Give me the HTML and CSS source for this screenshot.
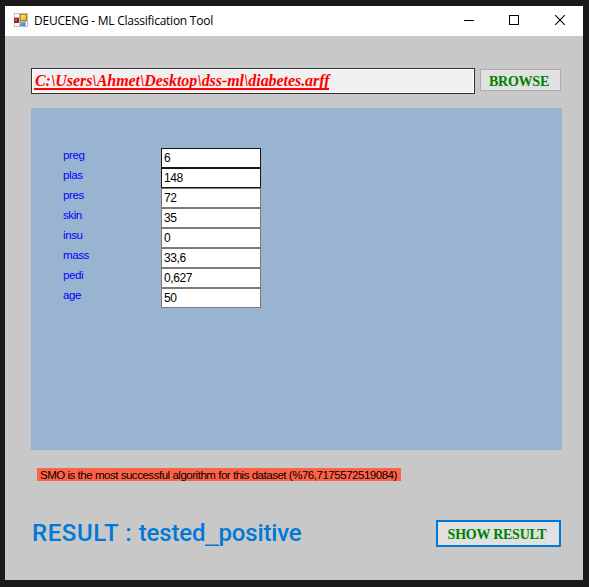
FILE: index.html
```html
<!DOCTYPE html>
<html lang="en">
<head>
<meta charset="utf-8">
<title>DEUCENG - ML Classification Tool</title>
<link rel="stylesheet" href="styles.css">
</head>
<body>
<main class="window">
  <header class="titlebar">
    <svg class="app-icon" width="14" height="14" viewBox="0 0 14 14" shape-rendering="crispEdges">
      <defs>
        <linearGradient id="gold" x2="1" y2="1"><stop stop-color="#ffe98c"/><stop offset="1" stop-color="#eeb300"/></linearGradient>
        <linearGradient id="blue" x2="1" y2="1"><stop stop-color="#8dbdf5"/><stop offset="1" stop-color="#3976d2"/></linearGradient>
      </defs>
      <path fill="#bdbdbd" d="M0 0h14v14H0z"/>
      <path fill="#fff" d="M1 1h4v3H1zM1 10h4v3H1zM12 9h1v4h-1z"/>
      <path fill="#a51c14" d="M0 5h5v5H0z"/><path fill="#dc6850" d="M1 6h2v2H1z"/>
      <path fill="#b98200" d="M6 1h7v7H6z"/><path fill="url(#gold)" d="M7 2h5v5H7z"/>
      <path fill="url(#blue)" d="M6 9h5v4H6z"/>
    </svg>
    <h1 class="title">DEUCENG - ML Classification Tool</h1>
    <svg class="controls" width="103" height="12" viewBox="0 0 103 12" fill="none" stroke="#000">
      <path d="M0 6.500h10M45.500 1.500h9v9h-9z" shape-rendering="crispEdges"/>
      <path d="M91.200 1.200l9.600 9.600M100.800 1.200l-9.600 9.600" stroke-width="1.100"/>
    </svg>
  </header>
  <section class="content">
    <div class="file-row">
      <div class="path"><span class="path-text">C:\Users\Ahmet\Desktop\dss-ml\diabetes.arff</span></div>
      <button class="button browse"><span>BROWSE</span></button>
    </div>
    <div class="panel">
      <div class="labels">
        <label>preg</label><label>plas</label><label>pres</label><label>skin</label>
        <label>insu</label><label>mass</label><label>pedi</label><label>age</label>
      </div>
      <div class="fields">
        <div class="field dark">6</div><div class="field dark">148</div><div class="field">72</div><div class="field">35</div>
        <div class="field">0</div><div class="field">33,6</div><div class="field">0,627</div><div class="field">50</div>
      </div>
    </div>
    <div class="message"><span>SMO is the most successful algorithm for this dataset (%76,7175572519084)</span></div>
    <footer class="footer">
      <div class="result"><span class="result-name">RESULT : </span>tested<span class="underscore">_</span>positive</div>
      <button class="button show"><span>SHOW RESULT</span></button>
    </footer>
  </section>
</main>
</body>
</html>
```
FILE: styles.css
```css
* { box-sizing: border-box; }
body {
  margin: 0;
  height: 587px;
  padding: 6px 6px 7px 5px;
  background: #1b1b1b;
  overflow: hidden;
  font-family: "Liberation Sans", sans-serif;
  white-space: nowrap;
}
.window { width: 578px; height: 574px; background: #c8c8c8; }
.titlebar {
  display: flex;
  align-items: center;
  height: 30px;
  padding: 0 16px 0 9px;
  background: #fff;
}
.app-icon { margin-bottom: 2px; }
.title {
  margin: 0 0 0 6px;
  font: 400 12px/16px "Open Sans", sans-serif;
  letter-spacing: -0.24px;
}
.controls { margin: -2px 0 0 auto; }
.content { padding: 32px 21px 0 26px; }
.file-row { display: flex; gap: 5px; align-items: flex-start; }
.path {
  width: 444px;
  height: 26px;
  padding: 2px 0 0 2px;
  border: 1px solid #333;
  box-shadow: inset 0 0 0 1px #fff;
  background: #f0f0f0;
}
.path-text {
  display: inline-block;
  height: 19px;
  padding-left: 1px;
  border-bottom: 2px solid #f00;
  color: #f00;
  font: italic bold 16px/19px "Liberation Serif", serif;
  letter-spacing: -0.06px;
}
.button {
  display: flex;
  align-items: center;
  justify-content: center;
  padding: 0;
  border: 1px solid #adadad;
  background: #e1e1e1;
  color: #008000;
  font: bold 14px/16px "Liberation Serif", serif;
  letter-spacing: -0.25px;
}
.browse { width: 81px; height: 22px; margin-top: 1px; padding: 3px 3px 0 0; }
.panel {
  display: flex;
  height: 342px;
  margin-top: 14px;
  padding: 40px 0 0 32px;
  background: #99b4d1;
}
.labels {
  display: grid;
  grid-auto-rows: 20px;
  align-content: start;
  width: 98px;
  color: #00f;
  font-size: 11.5px;
  line-height: 15px;
  letter-spacing: -0.4px;
}
.field {
  width: 100px;
  height: 20px;
  padding-left: 2px;
  border: 1px solid #7a7a7a;
  background: #fff;
  color: #000;
  font-size: 12px;
  line-height: 19px;
  letter-spacing: -0.4px;
}
.dark { border-color: #171717; }
.message {
  width: 364px;
  height: 13px;
  margin: 18px 0 0 6px;
  padding-left: 3px;
  background: #ff6347;
  font-size: 11.5px;
  line-height: 14px;
  letter-spacing: -0.47px;
}
.footer { display: flex; justify-content: space-between; margin-top: 39px; padding-right: 1px; }
.result {
  padding-left: 1px;
  color: #0078d7;
  font: 500 24px/27px Roboto, sans-serif;
  letter-spacing: -0.16px;
}
.result-name { letter-spacing: 0.6px; }
.underscore { font-family: "Liberation Sans", sans-serif; line-height: 1; }
.show { width: 125px; height: 27px; padding: 2px 3px 0 0; border: 2px solid #0078d7; }
```
